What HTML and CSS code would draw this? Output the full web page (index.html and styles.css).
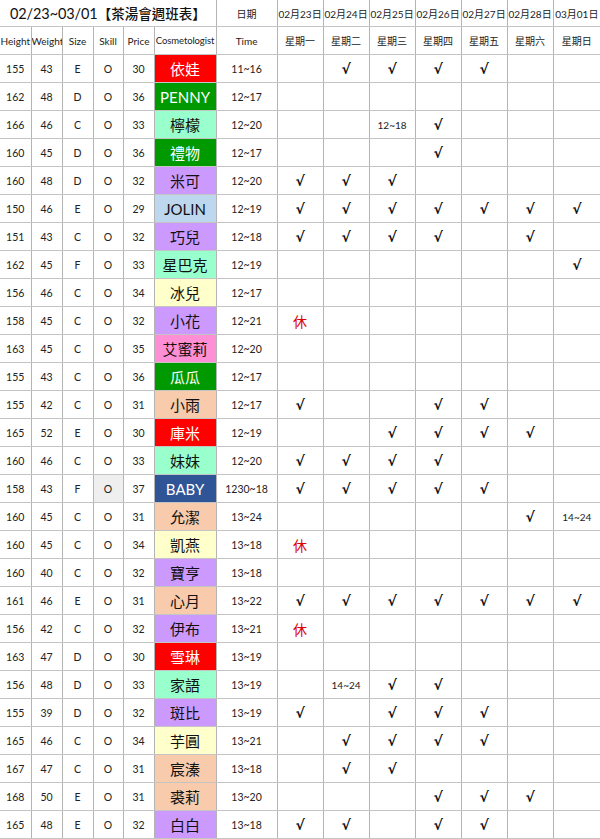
FILE: index.html
```html
<!DOCTYPE html>
<html lang="zh-Hant">
<head>
<meta charset="utf-8">
<title>茶湯會週班表</title>
<link rel="stylesheet" href="styles.css">
</head>
<body>
<table class="sheet">
<colgroup>
<col class="w31"><col class="w31"><col class="w31"><col class="w30"><col class="w31"><col class="w62"><col class="w61">
<col class="w46"><col class="w46"><col class="w46"><col class="w46"><col class="w46"><col class="w46"><col class="w47">
</colgroup>
<tr class="title-row">
<td colspan="6" class="title"><span class="title-date">02/23~03/01</span><span class="title-cjk">【茶湯會週班表】</span></td>
<td class="hd">日期</td><td class="hd">02月23日</td><td class="hd">02月24日</td><td class="hd">02月25日</td><td class="hd">02月26日</td><td class="hd">02月27日</td><td class="hd">02月28日</td><td class="hd">03月01日</td>
</tr>
<tr class="head-row">
<td class="hd">Height</td><td class="hd">Weight</td><td class="hd">Size</td><td class="hd">Skill</td><td class="hd">Price</td><td class="hd cosm">Cosmetologist</td><td class="hd">Time</td>
<td class="hd">星期一</td><td class="hd">星期二</td><td class="hd">星期三</td><td class="hd">星期四</td><td class="hd">星期五</td><td class="hd">星期六</td><td class="hd">星期日</td>
</tr>
<tr><td>155</td><td>43</td><td>E</td><td>O</td><td>30</td><td class="nm red">依娃</td><td>11~16</td><td></td><td class="ck">√</td><td class="ck">√</td><td class="ck">√</td><td class="ck">√</td><td></td><td></td></tr>
<tr><td>162</td><td>48</td><td>D</td><td>O</td><td>36</td><td class="nm green">PENNY</td><td>12~17</td><td></td><td></td><td></td><td></td><td></td><td></td><td></td></tr>
<tr><td>166</td><td>46</td><td>C</td><td>O</td><td>33</td><td class="nm mint">檸檬</td><td>12~20</td><td></td><td></td><td class="tm">12~18</td><td class="ck">√</td><td></td><td></td><td></td></tr>
<tr><td>160</td><td>45</td><td>D</td><td>O</td><td>36</td><td class="nm green">禮物</td><td>12~17</td><td></td><td></td><td></td><td class="ck">√</td><td></td><td></td><td></td></tr>
<tr><td>160</td><td>48</td><td>D</td><td>O</td><td>32</td><td class="nm purple">米可</td><td>12~20</td><td class="ck">√</td><td class="ck">√</td><td class="ck">√</td><td></td><td></td><td></td><td></td></tr>
<tr><td>150</td><td>46</td><td>E</td><td>O</td><td>29</td><td class="nm sky">JOLIN</td><td>12~19</td><td class="ck">√</td><td class="ck">√</td><td class="ck">√</td><td class="ck">√</td><td class="ck">√</td><td class="ck">√</td><td class="ck">√</td></tr>
<tr><td>151</td><td>43</td><td>C</td><td>O</td><td>32</td><td class="nm purple">巧兒</td><td>12~18</td><td class="ck">√</td><td class="ck">√</td><td class="ck">√</td><td class="ck">√</td><td></td><td class="ck">√</td><td></td></tr>
<tr><td>162</td><td>45</td><td>F</td><td>O</td><td>33</td><td class="nm mint">星巴克</td><td>12~19</td><td></td><td></td><td></td><td></td><td></td><td></td><td class="ck">√</td></tr>
<tr><td>156</td><td>46</td><td>C</td><td>O</td><td>34</td><td class="nm cream">冰兒</td><td>12~17</td><td></td><td></td><td></td><td></td><td></td><td></td><td></td></tr>
<tr><td>158</td><td>45</td><td>C</td><td>O</td><td>32</td><td class="nm purple">小花</td><td>12~21</td><td class="off">休</td><td></td><td></td><td></td><td></td><td></td><td></td></tr>
<tr><td>163</td><td>45</td><td>C</td><td>O</td><td>35</td><td class="nm pink">艾蜜莉</td><td>12~20</td><td></td><td></td><td></td><td></td><td></td><td></td><td></td></tr>
<tr><td>155</td><td>43</td><td>C</td><td>O</td><td>36</td><td class="nm green">瓜瓜</td><td>12~17</td><td></td><td></td><td></td><td></td><td></td><td></td><td></td></tr>
<tr><td>155</td><td>42</td><td>C</td><td>O</td><td>31</td><td class="nm peach">小雨</td><td>12~17</td><td class="ck">√</td><td></td><td></td><td class="ck">√</td><td class="ck">√</td><td></td><td></td></tr>
<tr><td>165</td><td>52</td><td>E</td><td>O</td><td>30</td><td class="nm red">庫米</td><td>12~19</td><td></td><td></td><td class="ck">√</td><td class="ck">√</td><td class="ck">√</td><td class="ck">√</td><td></td></tr>
<tr><td>160</td><td>46</td><td>C</td><td>O</td><td>33</td><td class="nm mint">妹妹</td><td>12~20</td><td class="ck">√</td><td class="ck">√</td><td class="ck">√</td><td class="ck">√</td><td></td><td></td><td></td></tr>
<tr><td>158</td><td>43</td><td>F</td><td class="shade">O</td><td>37</td><td class="nm navy">BABY</td><td>1230~18</td><td class="ck">√</td><td class="ck">√</td><td class="ck">√</td><td class="ck">√</td><td class="ck">√</td><td></td><td></td></tr>
<tr><td>160</td><td>45</td><td>C</td><td>O</td><td>31</td><td class="nm peach">允潔</td><td>13~24</td><td></td><td></td><td></td><td></td><td></td><td class="ck">√</td><td class="tm">14~24</td></tr>
<tr><td>160</td><td>45</td><td>C</td><td>O</td><td>34</td><td class="nm cream">凱燕</td><td>13~18</td><td class="off">休</td><td></td><td></td><td></td><td></td><td></td><td></td></tr>
<tr><td>160</td><td>40</td><td>C</td><td>O</td><td>32</td><td class="nm purple">寶亨</td><td>13~18</td><td></td><td></td><td></td><td></td><td></td><td></td><td></td></tr>
<tr><td>161</td><td>46</td><td>E</td><td>O</td><td>31</td><td class="nm peach">心月</td><td>13~22</td><td class="ck">√</td><td class="ck">√</td><td class="ck">√</td><td class="ck">√</td><td class="ck">√</td><td class="ck">√</td><td class="ck">√</td></tr>
<tr><td>156</td><td>42</td><td>C</td><td>O</td><td>32</td><td class="nm purple">伊布</td><td>13~21</td><td class="off">休</td><td></td><td></td><td></td><td></td><td></td><td></td></tr>
<tr><td>163</td><td>47</td><td>D</td><td>O</td><td>30</td><td class="nm red">雪琳</td><td>13~19</td><td></td><td></td><td></td><td></td><td></td><td></td><td></td></tr>
<tr><td>156</td><td>48</td><td>D</td><td>O</td><td>33</td><td class="nm mint">家語</td><td>13~19</td><td></td><td class="tm">14~24</td><td class="ck">√</td><td class="ck">√</td><td></td><td></td><td></td></tr>
<tr><td>155</td><td>39</td><td>D</td><td>O</td><td>32</td><td class="nm purple">斑比</td><td>13~19</td><td class="ck">√</td><td></td><td class="ck">√</td><td class="ck">√</td><td class="ck">√</td><td></td><td></td></tr>
<tr><td>165</td><td>46</td><td>C</td><td>O</td><td>34</td><td class="nm cream">芋圓</td><td>13~21</td><td></td><td class="ck">√</td><td class="ck">√</td><td class="ck">√</td><td class="ck">√</td><td></td><td></td></tr>
<tr><td>167</td><td>47</td><td>C</td><td>O</td><td>31</td><td class="nm peach">宸溱</td><td>13~18</td><td></td><td class="ck">√</td><td class="ck">√</td><td></td><td></td><td></td><td></td></tr>
<tr><td>168</td><td>50</td><td>E</td><td>O</td><td>31</td><td class="nm peach">裘莉</td><td>13~20</td><td></td><td></td><td></td><td class="ck">√</td><td class="ck">√</td><td class="ck">√</td><td></td></tr>
<tr><td>165</td><td>48</td><td>E</td><td>O</td><td>32</td><td class="nm purple">白白</td><td>13~18</td><td class="ck">√</td><td class="ck">√</td><td></td><td class="ck">√</td><td class="ck">√</td><td></td><td></td></tr>
</table>
</body>
</html>
```
FILE: styles.css
```css
html, body {
  margin: 0;
  padding: 0;
  background: #ffffff;
}
body {
  font-family: "Lato", "Noto Sans CJK TC", sans-serif;
  color: #222;
}
.sheet {
  width: 600px;
  table-layout: fixed;
  border-collapse: collapse;
}
.w30 { width: 30px; }
.w31 { width: 31px; }
.w46 { width: 46px; }
.w47 { width: 47px; }
.w61 { width: 61px; }
.w62 { width: 62px; }
.sheet td {
  height: 27px;
  padding: 0;
  text-align: center;
  vertical-align: middle;
  font-size: 10.5px;
  border-right: 1px solid #b4b4b4;
  border-bottom: 1px solid #c4c4c4;
  white-space: nowrap;
  overflow: hidden;
  color: #222;
}
.sheet tr td:last-child {
  border-right: none;
}
.title-row td {
  height: 26px;
}
.sheet td.title {
  color: #111;
}
.title-date {
  font-family: "Lato", sans-serif;
  font-size: 14.5px;
  letter-spacing: -0.1px;
}
.title-cjk {
  font-family: "Noto Sans CJK TC", sans-serif;
  font-size: 13.5px;
  font-weight: 500;
}
.sheet td.hd {
  font-size: 10px;
}
.sheet td.cosm {
  font-size: 9.5px;
  letter-spacing: -0.1px;
}
.nm {
  font-family: "Lato", "Noto Sans CJK TC", sans-serif;
  font-size: 15px !important;
  color: #111 !important;
}
.red { background: #ff0000; }
.green { background: #009900; }
.mint { background: #99ffcc; }
.purple { background: #cc99ff; }
.sky { background: #bdd7ee; }
.cream { background: #ffffcc; }
.pink { background: #ff8fd4; }
.peach { background: #f8cbad; }
.navy { background: #2f5597; }
.sheet td.red, .sheet td.green, .sheet td.navy {
  color: #ffffff !important;
}
.shade {
  background: #efefef;
}
.ck {
  font-family: "DejaVu Sans", sans-serif;
  font-size: 14px !important;
  font-weight: bold;
  color: #111 !important;
}
.off {
  font-family: "Noto Sans CJK TC", sans-serif;
  font-size: 14px !important;
  color: #e00000 !important;
}
.tm {
  font-size: 10px !important;
}
```
